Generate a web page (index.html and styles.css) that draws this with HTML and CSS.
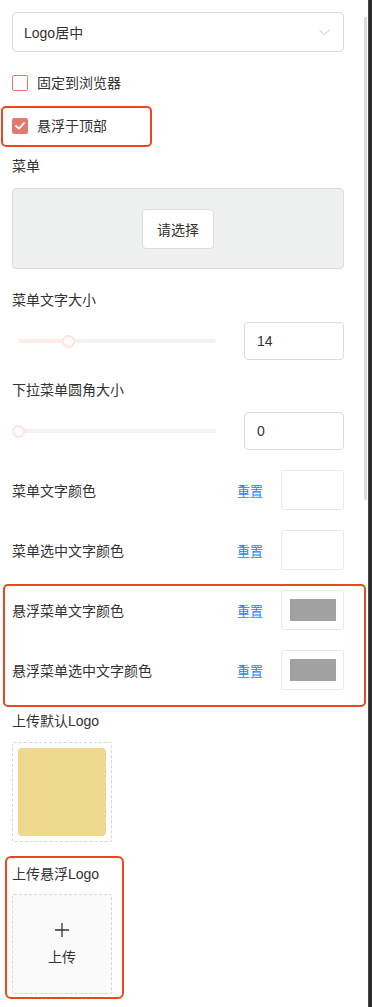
FILE: index.html
```html
<!DOCTYPE html>
<html lang="zh-CN">
<head>
<meta charset="utf-8">
<link rel="stylesheet" href="styles.css">
</head>
<body>
<div class="page">
  <div class="panel">
    <div class="scroll-thumb"></div>

    <div class="select">
      <span>Logo居中</span>
      <svg class="chev" width="11" height="7" viewBox="0 0 11 7"><path d="M0.5 0.8 L5.5 5.8 L10.5 0.8" fill="none" stroke="#c4c4c4" stroke-width="1"/></svg>
    </div>

    <label class="cb-row">
      <span class="cb"></span>
      <span>固定到浏览器</span>
    </label>

    <div class="mark mark-cb">
      <label class="cb-row inner">
        <span class="cb checked">
          <svg width="10" height="8" viewBox="0 0 10 8"><path d="M1 4 L4 6.6 L9 1.2" fill="none" stroke="#fff" stroke-width="1.8" stroke-linecap="round" stroke-linejoin="round"/></svg>
        </span>
        <span>悬浮于顶部</span>
      </label>
    </div>

    <div class="label l-menu">菜单</div>
    <div class="menu-box">
      <button class="btn">请选择</button>
    </div>

    <div class="label l-gap">菜单文字大小</div>
    <div class="slider-row">
      <div class="slider">
        <div class="track"></div>
        <div class="fill" style="width:50px"></div>
        <div class="handle" style="left:50px"></div>
      </div>
      <div class="num">14</div>
    </div>

    <div class="label l-gap2">下拉菜单圆角大小</div>
    <div class="slider-row">
      <div class="slider">
        <div class="track"></div>
        <div class="handle" style="left:0px"></div>
      </div>
      <div class="num">0</div>
    </div>

    <div class="color-row first">
      <span class="c-label">菜单文字颜色</span>
      <span class="reset">重置</span>
      <span class="swatch"></span>
    </div>
    <div class="color-row">
      <span class="c-label">菜单选中文字颜色</span>
      <span class="reset">重置</span>
      <span class="swatch"></span>
    </div>

    <div class="mark mark-colors">
      <div class="color-row inner-first">
        <span class="c-label">悬浮菜单文字颜色</span>
        <span class="reset">重置</span>
        <span class="swatch"><i class="chip"></i></span>
      </div>
      <div class="color-row">
        <span class="c-label">悬浮菜单选中文字颜色</span>
        <span class="reset">重置</span>
        <span class="swatch"><i class="chip"></i></span>
      </div>
    </div>

    <div class="label l-logo">上传默认Logo</div>
    <div class="upload filled"><div class="logo-img"></div></div>

    <div class="mark mark-upload">
      <div class="label l-float">上传悬浮Logo</div>
      <div class="upload empty">
        <svg width="16" height="16" viewBox="0 0 16 16"><path d="M8 1 V15 M1 8 H15" stroke="#333" stroke-width="1.3" fill="none"/></svg>
        <span class="up-text">上传</span>
      </div>
    </div>
  </div>
  <div class="edge"></div>
</div>
</body>
</html>
```

FILE: styles.css
```css
* { box-sizing: border-box; }
html, body { margin: 0; padding: 0; background: #fff; }
body {
  font-family: "Liberation Sans", "Noto Sans CJK SC", sans-serif;
  font-size: 14px;
  color: #333;
}
.page {
  display: flex;
  width: 372px;
  height: 1007px;
  overflow: hidden;
}
.panel {
  position: relative;
  width: 368px;
  padding: 12px 0 0 12px;
  display: flex;
  flex-direction: column;
  align-items: flex-start;
}
.edge {
  width: 4px;
  background: #2b2b2b;
  border-left: 1px solid #444;
}
.scroll-thumb {
  position: absolute;
  left: 364px;
  top: 17px;
  width: 3px;
  height: 483px;
  background: #dcdcdc;
}
.select {
  width: 332px;
  height: 40px;
  border: 1px solid #dcdcdc;
  border-radius: 4px;
  display: flex;
  align-items: center;
  justify-content: space-between;
  padding: 0 13px 0 11px;
  font-size: 14px;
  color: #333;
}
.chev { display: block; }
.cb-row {
  margin-top: 20px;
  height: 22px;
  display: flex;
  align-items: center;
  gap: 9px;
  line-height: 22px;
}
.cb {
  width: 16px;
  height: 16px;
  border: 1px solid #e57a6c;
  border-radius: 2px;
  background: #fff;
  display: flex;
  align-items: center;
  justify-content: center;
}
.cb.checked {
  background: #e07b6f;
  border-color: #e07b6f;
}
.mark {
  border: 2px solid #e8481f;
  border-radius: 5px;
}
.mark-cb {
  margin-top: 12px;
  margin-left: -11px;
  width: 151px;
  height: 41px;
  padding: 0 0 2px 9px;
  display: flex;
  align-items: center;
}
.cb-row.inner { margin-top: 0; }
.label {
  height: 22px;
  line-height: 22px;
}
.l-menu { margin-top: 8px; }
.menu-box {
  margin-top: 11px;
  width: 332px;
  height: 81px;
  background: #eff0f0;
  border: 1px solid #dadada;
  border-radius: 4px;
  display: flex;
  align-items: center;
  justify-content: center;
}
.btn {
  width: 72px;
  height: 40px;
  background: #fff;
  border: 1px solid #dcdcdc;
  border-radius: 4px;
  font-family: inherit;
  font-size: 14px;
  color: #333;
  padding: 0;
}
.l-gap { margin-top: 20px; }
.l-gap2 { margin-top: 19px; }
.slider-row {
  margin-top: 11px;
  width: 332px;
  height: 38px;
  display: flex;
  align-items: center;
  justify-content: space-between;
}
.slider {
  position: relative;
  margin-left: 6px;
  width: 198px;
  height: 4px;
}
.track {
  position: absolute;
  inset: 0;
  background: #f2f2f2;
  border-radius: 2px;
}
.fill {
  position: absolute;
  left: 0;
  top: 0;
  height: 4px;
  background: #fdece7;
  border-radius: 2px;
}
.handle {
  position: absolute;
  top: 50%;
  width: 13px;
  height: 13px;
  margin: -6.5px 0 0 -6.5px;
  border-radius: 50%;
  background: #fff;
  border: 2px solid #fde3dc;
}
.num {
  width: 100px;
  height: 38px;
  border: 1px solid #dcdcdc;
  border-radius: 4px;
  padding-left: 12px;
  display: flex;
  align-items: center;
  font-size: 14px;
}
.color-row {
  margin-top: 20px;
  width: 332px;
  height: 40px;
  display: flex;
  align-items: center;
}
.color-row.first { margin-top: 20px; }
.color-row.inner-first { margin-top: 0; }
.c-label { flex: 1; }
.reset {
  color: #2f80f3;
  font-size: 13px;
  margin-right: 18px;
}
.swatch {
  width: 63px;
  height: 40px;
  border: 1px solid #e9e9ef;
  border-radius: 2px;
  display: flex;
  align-items: center;
  justify-content: center;
}
.chip {
  display: block;
  width: 46px;
  height: 22px;
  background: #a1a1a1;
}
.mark-colors {
  margin-top: 14px;
  margin-left: -9px;
  width: 363px;
  padding: 4px 20px 15px 7px;
}
.l-logo { margin-top: 3px; }
.upload {
  width: 100px;
  height: 100px;
  border: 1px dashed #d6d6d6;
  border-radius: 2px;
}
.upload.filled {
  margin-top: 10px;
  padding: 5px;
}
.logo-img {
  width: 100%;
  height: 100%;
  background: #eed98f;
  border-radius: 4px;
}
.mark-upload {
  margin-top: 14px;
  margin-left: -7px;
  width: 119px;
  padding: 5px 10px 3px 5px;
  border-radius: 6px;
}
.upload.empty {
  margin-top: 9px;
  background: #fafafa;
  display: flex;
  flex-direction: column;
  align-items: center;
  justify-content: center;
  gap: 9px;
  padding-bottom: 0;
}
.up-text {
  font-size: 14px;
  line-height: 20px;
  color: #333;
}
```
